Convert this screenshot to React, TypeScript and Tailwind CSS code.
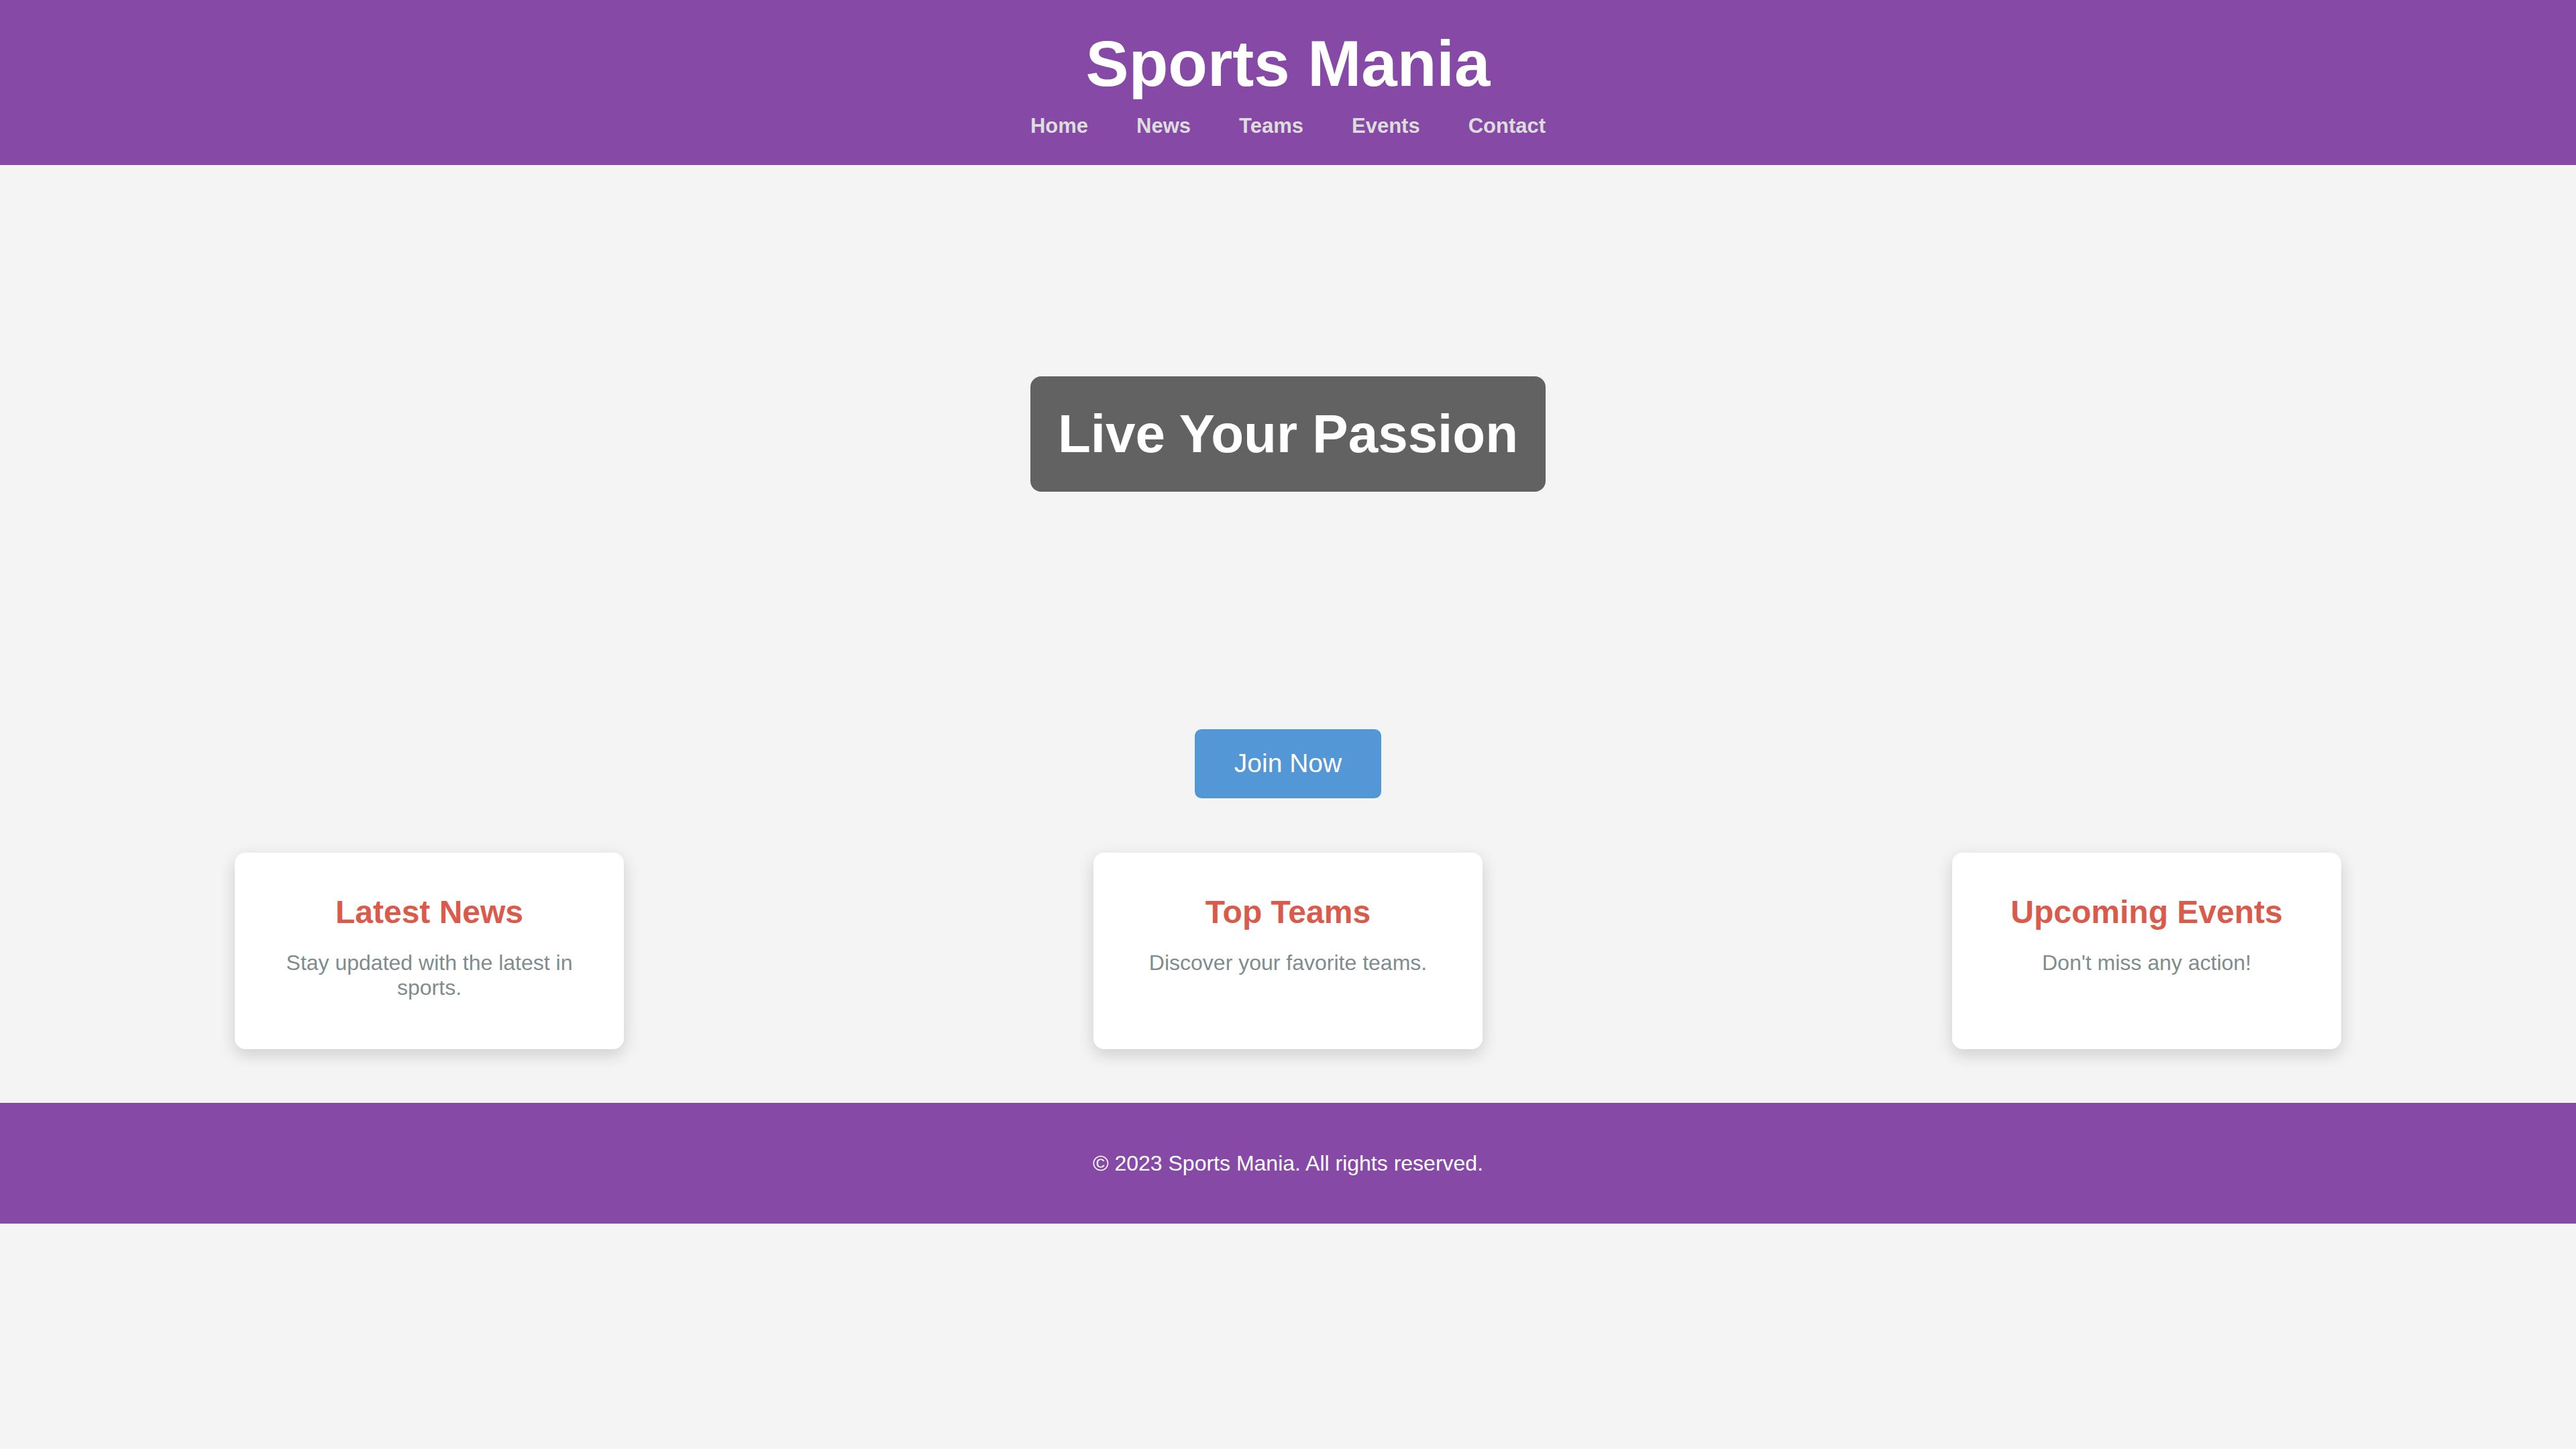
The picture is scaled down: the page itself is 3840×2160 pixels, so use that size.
import React from "react";

const cards = [
  { title: "Latest News", text: "Stay updated with the latest in sports." },
  { title: "Top Teams", text: "Discover your favorite teams." },
  { title: "Upcoming Events", text: "Don't miss any action!" },
];

const nav = ["Home", "News", "Teams", "Events", "Contact"];

export default function App() {
  return (
    <div
      className="min-h-[2160px] w-full bg-[#f4f4f4]"
      style={{ fontFamily: '"Liberation Sans", Arial, Helvetica, sans-serif' }}
    >
      <header className="flex flex-col items-center bg-[#8649a6] pt-[40px] pb-[40px]">
        <h1 className="text-[96px] font-bold leading-[1.15] text-white">Sports Mania</h1>
        <nav className="mt-[20px] flex gap-[72px]">
          {nav.map((n) => (
            <a key={n} className="text-[31px] font-bold leading-[1.15] text-[#dddddd]">
              {n}
            </a>
          ))}
        </nav>
      </header>

      <section className="flex h-[802px] items-center justify-center">
        <div className="rounded-[16px] bg-[#626262] px-[41px] py-[40px]">
          <h2 className="text-[80px] font-bold leading-[1.15] text-white">Live Your Passion</h2>
        </div>
      </section>

      <div className="mt-[39px] flex justify-center">
        <button className="rounded-[10px] bg-[#5397d6] px-[59px] py-[29px] text-[39px] leading-[1.15] text-white">
          Join Now
        </button>
      </div>

      <section className="flex justify-around pt-[81px] pb-[80px]">
        {cards.map((c) => (
          <div
            key={c.title}
            className="flex w-[580px] flex-col items-center rounded-[16px] bg-white px-[60px] pt-[61px] pb-[73px] text-center shadow-[0_8px_24px_rgba(0,0,0,0.16)]"
          >
            <h3 className="text-[48px] font-bold leading-[1.15] text-[#d95b4b]">{c.title}</h3>
            <p className="mt-[30px] text-[32px] leading-[1.15] text-[#7f8c8d]">{c.text}</p>
          </div>
        ))}
      </section>

      <footer className="bg-[#8649a6] py-[72px] text-center">
        <p className="text-[32px] leading-[1.15] text-white">© 2023 Sports Mania. All rights reserved.</p>
      </footer>
    </div>
  );
}
